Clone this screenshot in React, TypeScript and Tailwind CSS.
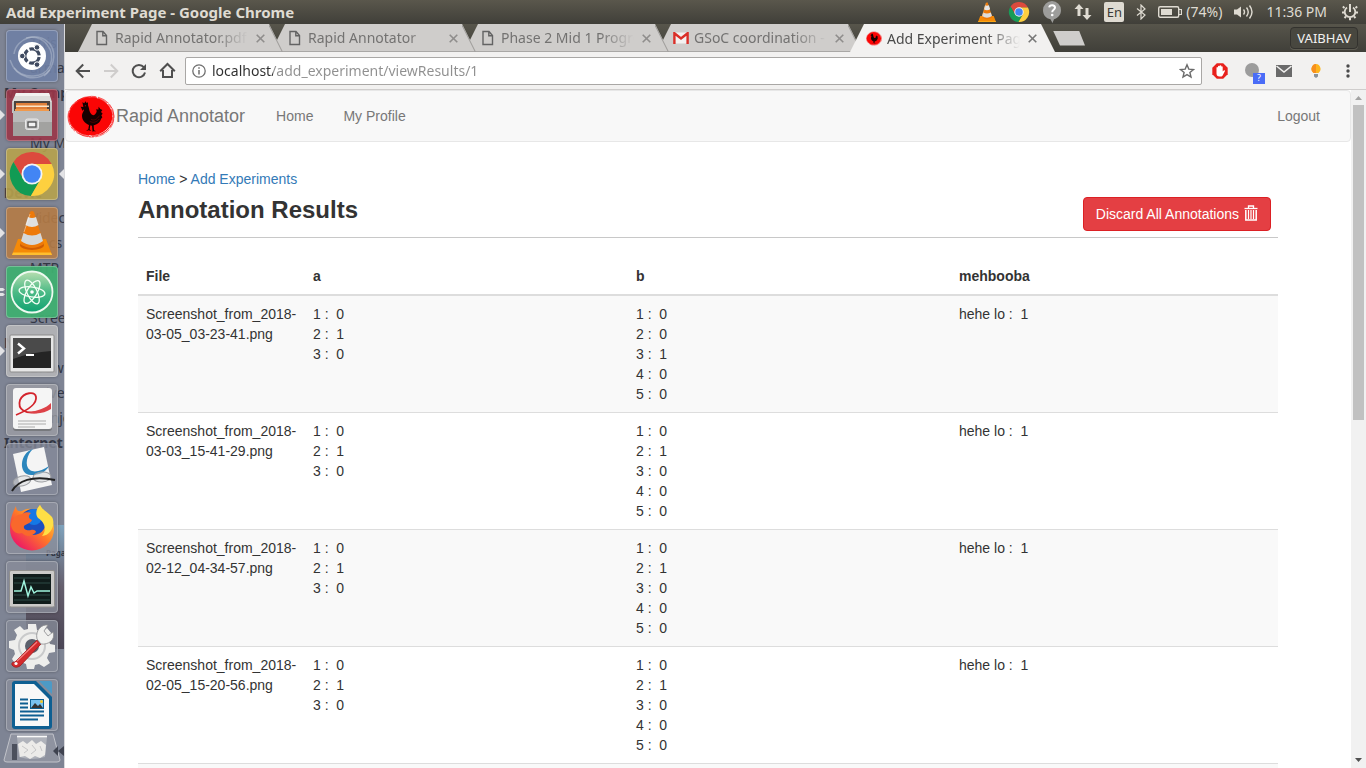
import React from "react";

const uiFont = "font-['Noto_Sans',sans-serif]";

/* ---------- shared glyphs ---------- */

function ChromeLogo({ className }: { className: string }) {
  return (
    <svg viewBox="0 0 48 48" className={className} aria-hidden="true">
      <path d="M43.6 14A22 22 0 0 0 5.5 12L15.3 29L24 24V14Z" fill="#dc4a3d" />
      <path d="M5.5 12A22 22 0 0 0 22.85 46L32.7 29L24 24L15.3 29Z" fill="#179c58" />
      <path d="M22.85 46A22 22 0 0 0 43.6 14H24V24L32.7 29Z" fill="#fdcf41" />
      <circle cx="24" cy="24" r="10.2" fill="#f4f4f4" />
      <circle cx="24" cy="24" r="8.2" fill="#4285f4" />
    </svg>
  );
}

function VlcCone({ className }: { className: string }) {
  return (
    <svg viewBox="0 0 40 44" className={className} aria-hidden="true">
      <path d="M5 31H35L40 44H0Z" fill="#f58a07" />
      <path d="M0 42.5H40V44H0Z" fill="#ffb21c" />
      <path d="M18 2Q20 -1 22 2L32 34Q20 42 8 34Z" fill="#ee7a0a" />
      <path d="M15.8 7Q20 9 24.2 7L27 16Q20 20 13 16Z" fill="#e6e6e6" />
      <path d="M11.5 23Q20 28 28.5 23L31 31Q20 38 9 31Z" fill="#dedede" />
      <path d="M18 2L13 19L9 34" stroke="#ffb35c" strokeWidth="1" fill="none" />
    </svg>
  );
}

function RoosterLogo({ className }: { className: string }) {
  return (
    <svg viewBox="0 0 144 129" className={className} aria-hidden="true">
      <g fill="none" stroke="#fb0505">
        <ellipse cx="73" cy="63" rx="68" ry="59" strokeWidth="2" strokeDasharray="37 3 61 5" />
        <ellipse cx="70" cy="66" rx="67" ry="59" strokeWidth="2" strokeDasharray="19 4 45 6" />
        <ellipse cx="74" cy="66" rx="67" ry="60" strokeWidth="1.500" strokeDasharray="29 5 15 3" transform="rotate(6 72 64)" />
      </g>
      <ellipse cx="71" cy="64" rx="65" ry="57" fill="#fb0505" />
      <path
        d="M48 30L46 22L52 25L55 19L59 24L63 22L63 31C67 40 66 51 73 58C79 64 86 58 89 50L88 42L94 44L95 35L100 42L106 45L102 51L107 56L103 61L106 67L102 72C99 83 89 89 80 91L81 106L87 109H79L77 111L75 92L70 91L68 103L73 108L65 106L57 108L64 103L66 90C53 85 44 73 45 60C46 52 52 48 51 43L46 47L44 41L41 35L49 36Z"
        fill="#150000"
      />
      <path d="M72 73C81 78 91 73 97 62M68 79C79 85 90 81 97 72" stroke="#8e0000" strokeWidth="1.5" fill="none" />
      <circle cx="55" cy="32" r="1.5" fill="#fb0505" />
    </svg>
  );
}

function PageGlyph() {
  return (
    <svg viewBox="0 0 12 16" className="h-4 w-3" fill="none" stroke="#636363" strokeWidth="1.4" aria-hidden="true">
      <path d="M1 1.5H7L10.5 5.5V14.5H1ZM6.8 1.5V5.7H10.5" />
    </svg>
  );
}

function GmailGlyph() {
  return (
    <svg viewBox="0 0 16 12" className="h-3 w-4" aria-hidden="true">
      <path d="M1 0.5H15V11.5H1Z" fill="#f3f1f0" />
      <path d="M1.4 12V1.2L8 6.4L14.6 1.2V12" fill="none" stroke="#da2f28" strokeWidth="2.4" />
    </svg>
  );
}

/* ---------- desktop top panel ---------- */

function TopPanel() {
  return (
    <header
      className={`flex h-6 shrink-0 items-center justify-between bg-linear-to-b from-[#5a574c] to-[#403f39] pl-[6px] pr-[7px] text-[#dfdbd2] ${uiFont}`}
    >
      <h1 className="text-[15px] font-bold leading-6">Add Experiment Page - Google Chrome</h1>
      <div className="flex items-center text-[14px] leading-6">
        <VlcCone className="mr-3 h-5 w-[18px]" />
        <ChromeLogo className="mr-3 h-[22px] w-[22px]" />
        <svg viewBox="0 0 20 24" className="mr-3 h-6 w-5" aria-hidden="true">
          <path d="M10 1A9 9 0 0 1 19 10C19 15 16 18 12 19.2L10.5 23L8.5 19.2C4 18.5 1 15 1 10A9 9 0 0 1 10 1Z" fill="#9d9d9b" />
          <path d="M7.2 7.4C7.6 4.3 13 4.4 13 7.6C13 9.8 10.2 9.8 10.2 12.2" stroke="#fff" strokeWidth="2" fill="none" />
          <circle cx="10.2" cy="15" r="1.3" fill="#fff" />
        </svg>
        <svg viewBox="0 0 18 18" className="mr-3 h-[18px] w-[18px]" fill="#dfdbd2" aria-hidden="true">
          <path d="M5 1L9.5 6H6.500V13H3.500V6H0.500ZM13 17L17.500 12H14.500V5H11.500V12H8.500Z" />
        </svg>
        <span className="mr-3 flex h-5 w-5 items-center justify-center rounded-xs bg-[#dfdbd2] text-[13px] text-[#3c3b37]">En</span>
        <svg viewBox="0 0 10 16" className="mr-3 h-4 w-[10px]" fill="none" stroke="#dfdbd2" strokeWidth="1.2" aria-hidden="true">
          <path d="M1 4.5L9 11L5 15V1L9 5L1 11.5" />
        </svg>
        <svg viewBox="0 0 24 14" className="mr-1 h-[14px] w-6" aria-hidden="true">
          <rect x="0.7" y="1.7" width="20" height="10.6" rx="1.5" fill="none" stroke="#dfdbd2" strokeWidth="1.4" />
          <rect x="3" y="4" width="11" height="6" fill="#dfdbd2" />
          <path d="M21 4.5H23.5V9.5H21" fill="none" stroke="#dfdbd2" strokeWidth="1.2" />
        </svg>
        <span className="mr-3">(74%)</span>
        <svg viewBox="0 0 20 16" className="mr-3 h-4 w-5" aria-hidden="true">
          <path d="M0 5.5H3L7 2.5V13.5L3 10.5H0Z" fill="#dfdbd2" />
          <path d="M9.5 5.5Q11.5 8 9.5 10.5M12.5 3.5Q16 8 12.5 12.5M15.5 1.5Q20.5 8 15.5 14.5" stroke="#dfdbd2" strokeWidth="1.4" fill="none" />
        </svg>
        <time className="mr-[14px]">11:36 PM</time>
        <svg viewBox="0 0 18 18" className="h-[18px] w-[18px]" fill="none" stroke="#dfdbd2" aria-hidden="true">
          <path d="M6 4.5A5.3 5.3 0 1 0 12 4.5" strokeWidth="1.8" />
          <path d="M9 1V9" strokeWidth="2" />
          <path d="M3.5 5L1.8 3.6M14.5 5L16.2 3.6M3.3 9.5H1M14.7 9.5H17M5 13.3L3.5 15M13 13.3L14.5 15M9 15V17.3" strokeWidth="2" />
        </svg>
      </div>
    </header>
  );
}

/* ---------- launcher ---------- */

const ghostRows: { text: string; bold?: boolean; wide?: boolean }[] = [
  { text: "This" },
  { text: "arma" },
  { text: "My Comp", bold: true, wide: true },
  { text: "Vi" },
  { text: "My M" },
  { text: "Pi" },
  { text: "Devic", bold: true, wide: true },
  { text: "Videc" },
  { text: "Docs" },
  { text: "MTP" },
  { text: "Vidi" },
  { text: "Scree" },
  { text: "Netwe", bold: true, wide: true },
  { text: "Brow" },
  { text: "Drive" },
  { text: "Manjo" },
  { text: "Internet", bold: true, wide: true },
];

function DashArt() {
  return (
    <>
      <g fill="none" stroke="#c9cfdd" strokeOpacity="0.4" strokeWidth="1.5">
        <path d="M8 24C10 8 32 0 44 14C52 25 46 40 38 46" />
        <path d="M20 8C38 4 50 20 44 36C38 48 18 50 8 38" />
        <path d="M4 30C10 48 30 54 44 40" />
      </g>
      <circle cx="26" cy="26" r="14" fill="#fff" />
      <circle cx="26" cy="26" r="7.2" fill="none" stroke="#3f4a60" strokeWidth="3.2" strokeDasharray="13.1 2" strokeDashoffset="-1" />
      <g fill="#3f4a60" stroke="#fff" strokeWidth="1">
        <circle cx="16.3" cy="26" r="2.8" />
        <circle cx="31" cy="17.4" r="2.8" />
        <circle cx="31" cy="34.6" r="2.8" />
      </g>
    </>
  );
}

function FilesArt() {
  return (
    <>
      <path d="M10 4H43L46 13H6Z" fill="#dededc" />
      <path d="M10 4H43L44 7H9Z" fill="#f2f2f0" />
      <path d="M6 13H46V24H6Z" fill="#c4c4c2" />
      <rect x="8" y="12" width="36" height="12" fill="#4c4440" />
      <path d="M10 14H41V24H10Z" fill="#e0803a" />
      <path d="M10 16.5H43V18H10Z" fill="#fbe5c8" />
      <path d="M9 20H43V23H9Z" fill="#f0994c" />
      <rect x="7" y="22" width="39" height="25" fill="#a2a2a0" />
      <rect x="7" y="22" width="39" height="11" fill="#bababa" />
      <rect x="19.500" y="30" width="13" height="10.500" rx="2" fill="#cecece" stroke="#e8e8e8" />
      <rect x="22" y="33" width="8" height="5" fill="#f2f2f2" stroke="#4d4d4d" strokeWidth="1.3" />
    </>
  );
}

function ChromeArt() {
  return (
    <g transform="translate(2 2)">
      <path d="M43.6 14A22 22 0 0 0 5.5 12L15.3 29L24 24V14Z" fill="#dc4a3d" />
      <path d="M5.5 12A22 22 0 0 0 22.85 46L32.7 29L24 24L15.3 29Z" fill="#119b54" />
      <path d="M22.85 46A22 22 0 0 0 43.6 14H24V24L32.7 29Z" fill="#fdd03f" />
      <circle cx="24" cy="24" r="10.5" fill="#f4f4f4" />
      <circle cx="24" cy="24" r="8.700" fill="#4285f4" />
    </g>
  );
}

function VlcArt() {
  return (
    <g transform="translate(6 4)">
      <path d="M6 28H34L40 44H0Z" fill="#f58a07" />
      <path d="M1 41.500H39L40 44H0Z" fill="#ffbe2e" />
      <ellipse cx="20" cy="34" rx="12" ry="5" fill="#cf5c04" />
      <path d="M18 1Q20 -1 22 1L32 33Q20 41 8 33Z" fill="#ee7a0a" />
      <path d="M16 6Q20 8 24 6L26.500 14Q20 18 13.500 14Z" fill="#dfe0e0" />
      <path d="M11.500 22Q20 27 28.500 22L31 30Q20 38 9 30Z" fill="#d5d8da" />
      <path d="M18 3L12 21" stroke="#fff" strokeOpacity="0.4" />
    </g>
  );
}

function AtomArt() {
  return (
    <>
      <circle cx="26" cy="26" r="20.500" fill="url(#atomFill)" stroke="#eefaf0" strokeWidth="1.8" />
      <g fill="none" stroke="#f3fff5" strokeWidth="1.300">
        <ellipse cx="26" cy="26" rx="13" ry="5" transform="rotate(8 26 26)" />
        <ellipse cx="26" cy="26" rx="13" ry="5" transform="rotate(64 26 26)" />
        <ellipse cx="26" cy="26" rx="13" ry="5" transform="rotate(121 26 26)" />
      </g>
      <circle cx="26" cy="26" r="1.800" fill="#fff" />
    </>
  );
}

function TerminalArt() {
  return (
    <>
      <rect x="4" y="10" width="44" height="37" rx="1" fill="#e6e6e6" stroke="#8b8b8b" />
      <rect x="7" y="13" width="38" height="30" fill="#242424" />
      <path d="M7 13H45V26Q26 27 7 34Z" fill="#4a4a4a" />
      <path d="M12 18.500L18 23.500L12 28.500" fill="none" stroke="#fff" strokeWidth="2.400" />
      <path d="M20 30H28" stroke="#fff" strokeWidth="2" />
    </>
  );
}

function PdfArt() {
  return (
    <>
      <rect x="7" y="5" width="39" height="42" rx="3" fill="#77797d" />
      <rect x="7" y="4" width="39" height="41" rx="3" fill="#f5f5f5" />
      <path d="M10 31C22 26 31 20 30 13C29 7 18 8 14 16C11 26 20 30 31 28" fill="none" stroke="#d3242c" strokeWidth="1.800" />
      <path d="M22 28C32 27 40 24 45 19V25C39 29 30 31 22 28Z" fill="#dd4248" />
      <path d="M12 37H40M12 40H40M12 43H29" stroke="#c4c4c4" strokeWidth="1.300" />
    </>
  );
}

function ViewerArt() {
  return (
    <>
      <path d="M7 11L38 4L46 42L15 49Z" fill="#f4f4f4" />
      <path d="M27 6C13 10 12 33 26 32C33 32 39 30 43 23C36 28 28 30 24 27C18 23 21 11 27 6Z" fill="#2b86bd" />
      <g fill="#d8dadd" fillOpacity="0.55" stroke="#9b9da1">
        <ellipse cx="16" cy="38" rx="9" ry="5" transform="rotate(-14 16 38)" />
        <ellipse cx="36" cy="34" rx="9" ry="5" transform="rotate(-4 36 34)" />
      </g>
      <path d="M6 48C12 38 26 32 49 37" fill="none" stroke="#222" strokeWidth="2" />
    </>
  );
}

function FirefoxArt() {
  return (
    <>
      <path
        d="M10 4C10 8 12 10 16 9C21 6 26 6 30 9L34 3C35 9 48 14 48 27A22 21.5 0 0 1 4 27C4 18 6 12 10 4Z"
        fill="url(#foxFill)"
      />
      <circle cx="27" cy="20" r="13" fill="#1b4fc0" />
      <circle cx="28" cy="15" r="8" fill="#1478e6" />
      <path
        d="M5 22C7 14 12 13 16 12C19 10 22 10 25 11C22 14 22 16 26 18C25 21 20 22 18 24C17 28 22 29 25 28C28 27 30 29 30 30C27 34 21 36 16 31C10 33 5 28 5 22Z"
        fill="#f9682c"
      />
      <path d="M34 3C30 7 29 12 32 16C39 20 41 28 36 34C45 34 50 22 46 15C42 10 37 9 34 3Z" fill="#ffdf45" />
    </>
  );
}

function MonitorArt() {
  return (
    <>
      <rect x="3.500" y="9.500" width="45" height="36.500" rx="1.500" fill="#cbcac8" stroke="#8f8e8c" />
      <rect x="7" y="13" width="38" height="30" fill="#101c1b" />
      <path d="M8 17H44M8 22H44M8 34H44M8 39H44" stroke="#2c4b46" />
      <path d="M8 30H15L18 20L22 35L25 26L28 32L31 30H44" fill="none" stroke="#9ff3dd" strokeWidth="1.500" />
    </>
  );
}

function SettingsArt() {
  return (
    <>
      <path
        d="M22 4H30L31 10L36 12L41 8L46 14L42 19L44 24L49 25V32L43 33L41 38L44 43L38 47L33 44L29 45L28 49H21L20 44L15 42L10 45L6 39L9 34L8 30L3 28V21L9 20L11 15L8 10L14 6L18 10L22 9Z"
        fill="#eeeeec"
      />
      <circle cx="26" cy="26" r="13" fill="none" stroke="#c9cacb" strokeWidth="2" />
      <circle cx="26" cy="26" r="7" fill="#5b606c" />
      <path d="M9 42L31 20L35 24L14 46Q9 49 6 45Q5 42 9 42Z" fill="#d42a2c" stroke="#9d1c1e" strokeWidth="0.800" />
      <path d="M11 41L31 22" stroke="#f38080" strokeWidth="1.200" />
      <path d="M31 19C29 10 36 4 42 5L38 11L42 16L47 12C50 20 42 25 35 24Z" fill="#f1f1ef" stroke="#8b8c8e" strokeWidth="0.800" />
      <circle cx="10" cy="43.500" r="1.600" fill="#fff" />
    </>
  );
}

function WriterArt() {
  return (
    <>
      <path d="M6 5Q6 2 9 2H30L46 18V47Q46 50 43 50H9Q6 50 6 47Z" fill="#0e5f92" />
      <path d="M9 5H28L43 20V47H9Z" fill="#f8f8f8" />
      <path d="M33 2H44Q46 2 46 4V15Z" fill="#4d9ac6" />
      <path d="M14 20.500H22M14 24.500H22M14 28.500H22M14 32.500H38M14 36.500H38M14 40.500H32" stroke="#0e5f92" strokeWidth="2" />
      <rect x="24.500" y="20.500" width="13" height="9" fill="#79c1ee" stroke="#0e5f92" />
      <path d="M25 29L29 24L32 27L34 25L37 29Z" fill="#333" />
      <circle cx="35.500" cy="22.500" r="1.500" fill="#f5c928" />
    </>
  );
}

type LauncherItem = { name: string; tile: string; art: () => React.JSX.Element; running?: boolean };

const launcher: LauncherItem[] = [
  { name: "Search your computer", tile: "bg-[#6f7fa4]/90", art: DashArt },
  { name: "Files", tile: "bg-[#9a3648]/90", art: FilesArt, running: true },
  { name: "Google Chrome", tile: "bg-[#b7a24b]/90", art: ChromeArt, running: true },
  { name: "VLC media player", tile: "bg-[#b57b45]/90", art: VlcArt, running: true },
  { name: "Atom", tile: "bg-[#3fae70]/95", art: AtomArt, running: true },
  { name: "Terminal", tile: "bg-[#b5b5b7]/90", art: TerminalArt, running: true },
  { name: "Document Viewer", tile: "bg-[#9c9ea4]/80", art: PdfArt },
  { name: "Okular", tile: "bg-[#858a98]/80", art: ViewerArt },
  { name: "Firefox", tile: "bg-[#8b8f9b]/80", art: FirefoxArt },
  { name: "System Monitor", tile: "bg-[#888c98]/80", art: MonitorArt },
  { name: "System Settings", tile: "bg-[#858a96]/80", art: SettingsArt },
  { name: "LibreOffice Writer", tile: "bg-[#8b8f9b]/70", art: WriterArt },
];

function Launcher() {
  return (
    <nav aria-label="Launcher" className="relative w-[65px] shrink-0 overflow-hidden border-r border-[#d9d9dc] bg-[#7e8494]">
      <div aria-hidden="true" className={`absolute inset-0 pt-[6px] text-[14px] leading-[25px] text-[#343846] ${uiFont}`}>
        {ghostRows.map((row) => (
          <div
            key={row.text}
            className={`h-[25px] whitespace-nowrap ${row.bold ? "font-bold" : ""} ${row.wide ? "pl-1" : "pl-[30px]"}`}
          >
            {row.text}
          </div>
        ))}
        <div className="ml-[26px] mt-[70px] h-[124px] bg-linear-to-b from-[#7fa3bd] via-[#655f6d] to-[#4b4656] pt-5 leading-3">
          <span className="pl-5 text-[8px] font-bold">Pagal</span>
        </div>
      </div>
      <svg className="absolute h-0 w-0" aria-hidden="true">
        <defs>
          <linearGradient id="atomFill" x1="0" y1="0" x2="0" y2="1">
            <stop offset="0" stopColor="#b8deb0" />
            <stop offset="0.5" stopColor="#4cba86" />
            <stop offset="1" stopColor="#0fa271" />
          </linearGradient>
          <linearGradient id="foxFill" x1="0.9" y1="0.1" x2="0.2" y2="0.9">
            <stop offset="0" stopColor="#ffd63c" />
            <stop offset="0.5" stopColor="#ff7a26" />
            <stop offset="1" stopColor="#ee1d63" />
          </linearGradient>
        </defs>
      </svg>
      <ul className="relative flex flex-col gap-[7px] pt-[6px]">
        {launcher.map(({ name, tile, art: Art, running }) => (
          <li key={name} className="flex items-center">
            <span className="flex w-[6px] shrink-0">
              {running && (
                <svg viewBox="0 0 5 10" className="h-[10px] w-[5px]" aria-hidden="true">
                  {name === "Atom" ? (
                    <path d="M0 1H3L5 2.500L3 4H0ZM0 6H3L5 7.500L3 9H0Z" fill="#e3e3e6" />
                  ) : (
                    <path d="M0 0L5 5L0 10Z" fill="#e3e3e6" />
                  )}
                </svg>
              )}
            </span>
            <button
              type="button"
              aria-label={name}
              className={`h-[52px] w-[52px] rounded-sm border border-white/25 shadow-[0_0_3px_#00000055] ${tile}`}
            >
              <svg viewBox="1 1 50 50" className="h-full w-full" aria-hidden="true">
                <Art />
              </svg>
            </button>
            {name === "Google Chrome" && (
              <svg viewBox="0 0 5 10" className="ml-px h-[10px] w-[5px]" aria-hidden="true">
                <path d="M5 0L0 5L5 10Z" fill="#e3e3e6" />
              </svg>
            )}
          </li>
        ))}
      </ul>
      <button type="button" aria-label="Trash" className="relative mt-[2px] block w-full">
        <svg viewBox="0 0 64 35" className="h-[35px] w-16" aria-hidden="true">
          <path d="M11 1H53L60 27Q60 29 57 29H7Q4 29 4 27Z" fill="#9da0aa" fillOpacity="0.55" stroke="#c1c3ca" />
          <path d="M12 11H17V27H12Z" fill="#4c505d" />
          <path d="M58 13L53 18L58 23ZM64 13L58 18L64 23Z" fill="#3f4350" />
          <path d="M17 4H47L45 24Q32 28 19 24Z" fill="#dfe0e2" fillOpacity="0.4" />
          <path d="M17 3.500H47" stroke="#fafafa" strokeWidth="1.600" />
          <path d="M18 11L23 8L27 11L32 7L36 11L41 8L46 12L45 22L40 25L35 23L30 26L25 23L20 24Z" fill="#ecebe9" />
          <path d="M22 13L28 17L24 20M32 12L36 17L31 21M40 13L42 18" stroke="#c6c6c7" fill="none" />
        </svg>
      </button>
    </nav>
  );
}

/* ---------- browser chrome ---------- */

const tabs = [
  { title: "Rapid Annotator.pdf", icon: <PageGlyph />, layer: "z-40" },
  { title: "Rapid Annotator", icon: <PageGlyph />, layer: "z-30" },
  { title: "Phase 2 Mid 1 Progress", icon: <PageGlyph />, layer: "z-20" },
  { title: "GSoC coordination - mail", icon: <GmailGlyph />, layer: "z-10" },
  { title: "Add Experiment Page", icon: <RoosterLogo className="h-[15px] w-4" />, layer: "z-50", active: true },
];

function TabStrip() {
  return (
    <div className={`flex h-7 items-center bg-linear-to-b from-[#57554b] to-[#403f39] pl-[13px] pr-2 ${uiFont}`}>
      {tabs.map((tab) => (
        <div
          key={tab.title}
          className={`relative -mr-3 flex h-7 w-[205px] items-center px-4 pt-px [clip-path:polygon(14px_0,calc(100%-14px)_0,100%_100%,0_100%)] ${tab.layer} ${
            tab.active ? "bg-[#f2f1f0] text-[#4a4a4a]" : "border-b border-[#a9a7a5] bg-[#cfcdcb] text-[#737271]"
          }`}
        >
          {!tab.active && (
            <svg viewBox="0 0 14 28" className="absolute right-0 top-0 h-7 w-[14px]" aria-hidden="true">
              <path d="M0 0L14 28" stroke="#a09e9c" strokeWidth="2" />
            </svg>
          )}
          <span className="flex w-4 shrink-0 justify-center">{tab.icon}</span>
          <a
            href="#tab"
            className="ml-[5px] flex-1 overflow-hidden whitespace-nowrap text-[14px] leading-7 [mask-image:linear-gradient(to_right,black_calc(100%-38px),transparent_calc(100%-4px))]"
          >
            {tab.title}
          </a>
          <button type="button" aria-label={`Close ${tab.title}`} className="ml-1 mr-[2px] flex h-4 w-[9px] shrink-0 items-center">
            <svg viewBox="0 0 9 9" className="h-[9px] w-[9px]" stroke={tab.active ? "#777" : "#8f8d8c"} strokeWidth="1.6" aria-hidden="true">
              <path d="M0.700 0.700L8.300 8.300M8.300 0.700L0.700 8.300" />
            </svg>
          </button>
        </div>
      ))}
      <button
        type="button"
        aria-label="New tab"
        className="ml-[10px] h-[15px] w-8 bg-[#cfcdcb] [clip-path:polygon(0_0,26px_0,100%_100%,7px_100%)]"
      />
      <button
        type="button"
        className="ml-auto h-[22px] rounded-sm border border-[#33322e] bg-[#48473f] px-[6px] text-[13px] leading-5 text-[#f2f1f0] shadow-[0_1px_0_#5e5c52]"
      >
        VAIBHAV
      </button>
    </div>
  );
}

function Toolbar() {
  return (
    <div className={`flex h-[38px] items-center border-b border-[#cfcdcc] bg-[#f2f1f0] pl-[10px] pr-4 ${uiFont}`}>
      <button type="button" aria-label="Back" className="mr-3">
        <svg viewBox="0 0 16 16" className="h-4 w-4" fill="none" stroke="#4f4f4f" strokeWidth="2" aria-hidden="true">
          <path d="M15 8H2M8.200 1.500L1.700 8L8.200 14.500" />
        </svg>
      </button>
      <button type="button" aria-label="Forward" className="mr-3">
        <svg viewBox="0 0 16 16" className="h-4 w-4" fill="none" stroke="#cfcdcc" strokeWidth="2" aria-hidden="true">
          <path d="M1 8H14M7.800 1.500L14.300 8L7.800 14.500" />
        </svg>
      </button>
      <button type="button" aria-label="Reload" className="mr-3">
        <svg viewBox="0 0 16 16" className="h-4 w-4" fill="none" stroke="#4f4f4f" strokeWidth="2" aria-hidden="true">
          <path d="M12.800 4.200A6.200 6.200 0 1 0 14 9.500" />
          <path d="M15 1V7H9Z" fill="#4f4f4f" stroke="none" />
        </svg>
      </button>
      <button type="button" aria-label="Home page" className="mr-[9px]">
        <svg viewBox="0 0 17 17" className="h-[17px] w-[17px]" fill="none" stroke="#4f4f4f" strokeWidth="2" aria-hidden="true">
          <path d="M1.200 9.200L8.500 2L15.800 9.200M4 8V15H13V8" />
        </svg>
      </button>
      <div className="flex h-7 flex-1 items-center rounded-xs border border-[#a9a7a5] bg-white px-[6px]">
        <svg viewBox="0 0 14 14" className="mr-[6px] h-[14px] w-[14px] shrink-0" fill="none" stroke="#6f6f6f" aria-hidden="true">
          <circle cx="7" cy="7" r="6.200" strokeWidth="1.300" />
          <path d="M7 6V10.500M7 3.300V4.800" strokeWidth="1.500" />
        </svg>
        <input
          aria-label="Address"
          defaultValue="localhost/add_experiment/viewResults/1"
          className="h-6 min-w-0 flex-1 bg-linear-to-r from-[#2f2f2f] from-[61px] to-[#8f8f8f] to-[61px] bg-clip-text text-[14px] text-transparent outline-none"
        />
        <button type="button" aria-label="Bookmark this page">
          <svg viewBox="0 0 16 16" className="h-4 w-4" fill="none" stroke="#6b6b6b" strokeWidth="1.400" aria-hidden="true">
            <path d="M8 1.800L9.800 6.100L14.500 6.500L10.900 9.500L12 14L8 11.600L4 14L5.100 9.500L1.500 6.500L6.200 6.100Z" />
          </svg>
        </button>
      </div>
      <button type="button" aria-label="Ad blocker" className="ml-[10px]">
        <svg viewBox="0 0 16 16" className="h-4 w-4" aria-hidden="true">
          <path d="M4.800 0.300H11.200L15.700 4.800V11.200L11.200 15.700H4.800L0.300 11.200V4.800Z" fill="#e8211d" />
          <path d="M4.500 8V4.500Q5.300 3.500 6 4.500V3.200Q6.900 2.300 7.600 3.200V2.500Q8.400 1.800 9.200 2.500V3.500Q10 2.800 10.700 3.700V8.500L12 7.200Q13.200 7 13 8L10.500 12.700Q9.500 13.800 7.500 13.500Q4.500 13.300 4.500 10.500Z" fill="#fff" />
        </svg>
      </button>
      <button type="button" aria-label="Helper extension" className="relative ml-4 h-4 w-[17px]">
        <svg viewBox="0 0 17 16" className="h-4 w-[17px]" aria-hidden="true">
          <circle cx="8" cy="7" r="7" fill="#9c9c9c" />
        </svg>
        <span className="absolute left-[9px] top-[10px] flex h-[11px] w-3 items-center justify-center bg-[#4a6cf7] text-[9px] text-white">?</span>
      </button>
      <button type="button" aria-label="Mail" className="ml-[15px]">
        <svg viewBox="0 0 16 12" className="h-3 w-4" aria-hidden="true">
          <path d="M0 0H16V12H0Z" fill="#6a6a6a" />
          <path d="M0.500 1L8 7L15.500 1" fill="none" stroke="#f2f1f0" strokeWidth="1.600" />
        </svg>
      </button>
      <button type="button" aria-label="Tips" className="ml-[19px]">
        <svg viewBox="0 0 10 14" className="h-[14px] w-[10px]" aria-hidden="true">
          <path d="M5 0A5 5 0 0 1 7.500 9H2.500A5 5 0 0 1 5 0Z" fill="#fdb51e" />
          <path d="M5 0A5 5 0 0 0 2.500 9H5Z" fill="#f78f1e" />
          <path d="M3 10H7V12.500L5 14L3 12.500Z" fill="#8a9299" />
        </svg>
      </button>
      <button type="button" aria-label="Browser menu" className="ml-[25px]">
        <svg viewBox="0 0 4 14" className="h-[14px] w-1" fill="#4a4a4a" aria-hidden="true">
          <circle cx="2" cy="2" r="1.700" />
          <circle cx="2" cy="7" r="1.700" />
          <circle cx="2" cy="12" r="1.700" />
        </svg>
      </button>
    </div>
  );
}

/* ---------- page ---------- */

const results = [
  { file: ["Screenshot_from_2018-", "03-05_03-23-41.png"], a: [0, 1, 0], b: [0, 0, 1, 0, 0], m: 1 },
  { file: ["Screenshot_from_2018-", "03-03_15-41-29.png"], a: [0, 1, 0], b: [0, 1, 0, 0, 0], m: 1 },
  { file: ["Screenshot_from_2018-", "02-12_04-34-57.png"], a: [0, 1, 0], b: [0, 1, 0, 0, 0], m: 1 },
  { file: ["Screenshot_from_2018-", "02-05_15-20-56.png"], a: [0, 1, 0], b: [0, 1, 0, 0, 0], m: 1 },
];

function Counts({ values }: { values: number[] }) {
  return (
    <>
      {values.map((value, i) => (
        <div key={i}>
          {i + 1} :&nbsp; {value}
        </div>
      ))}
    </>
  );
}

function ResultsPage() {
  return (
    <div className="min-w-0 flex-1 overflow-hidden bg-white font-['Liberation_Sans',sans-serif] text-[14px] leading-5 text-[#333]">
      <nav className="flex h-[52px] items-center rounded-sm border border-[#e7e7e7] bg-[#f8f8f8] text-[#777]">
        <a href="#brand" className="flex items-center pl-px text-[18px]">
          <RoosterLogo className="h-[43px] w-12" />
          <span className="ml-px">Rapid Annotator</span>
        </a>
        <a href="#home" className="ml-[31px]">Home</a>
        <a href="#profile" className="ml-[30px]">My Profile</a>
        <a href="#logout" className="ml-auto mr-[30px]">Logout</a>
      </nav>
      <main className="mx-auto max-w-[1170px] px-[15px] pt-[27px]">
        <div>
          <a href="#home" className="text-[#337ab7]">Home</a> &gt;{" "}
          <a href="#experiments" className="text-[#337ab7]">Add Experiments</a>
        </div>
        <div className="flex items-start justify-between border-b border-[#c8c8c8] pb-[6px] pt-2">
          <h2 className="text-[24px] font-bold leading-[26px]">Annotation Results</h2>
          <button
            type="button"
            className="mr-[7px] flex h-[34px] items-center rounded-sm border border-[#dc2024] bg-[#e43f43] px-3 text-white"
          >
            Discard All Annotations
            <svg viewBox="0 0 14 16" className="mb-[3px] ml-[5px] h-4 w-[14px]" fill="none" stroke="#fff" aria-hidden="true">
              <path d="M0.500 3.500H13.500" strokeWidth="1.300" />
              <path d="M4.500 3V1H9.500V3" strokeWidth="1.300" />
              <path d="M1.800 5V14.900H12.200V5" strokeWidth="1.500" />
              <path d="M4.500 5V14M7 5V14M9.500 5V14" strokeWidth="1.200" />
            </svg>
          </button>
        </div>
        <table className="mt-5 w-full table-fixed border-collapse text-left">
          <thead>
            <tr className="border-b-2 border-[#ddd]">
              <th className="w-[167px] p-2">File</th>
              <th className="w-[323px] p-2">a</th>
              <th className="w-[323px] p-2">b</th>
              <th className="p-2">mehbooba</th>
            </tr>
          </thead>
          <tbody>
            {results.map((row) => (
              <tr key={row.file[1]} className="border-t border-[#ddd] align-top odd:bg-[#f9f9f9]">
                <td className="p-2">
                  {row.file[0]}
                  <wbr />
                  {row.file[1]}
                </td>
                <td className="p-2"><Counts values={row.a} /></td>
                <td className="p-2"><Counts values={row.b} /></td>
                <td className="p-2">hehe lo :&nbsp; {row.m}</td>
              </tr>
            ))}
            <tr className="h-10 border-t border-[#ddd] odd:bg-[#f9f9f9]">
              <td colSpan={4} />
            </tr>
          </tbody>
        </table>
      </main>
    </div>
  );
}

function Scrollbar() {
  return (
    <div aria-hidden="true" className="flex w-[15px] shrink-0 flex-col items-center bg-[#f1f1f1]">
      <svg viewBox="0 0 15 15" className="h-[15px] w-[15px]">
        <path d="M4 10L7.500 6L11 10Z" fill="#a3a3a3" />
      </svg>
      <div className="h-[315px] w-[11px] bg-[#c1c1c1]" />
      <svg viewBox="0 0 15 15" className="mt-auto h-[15px] w-[15px]">
        <path d="M4 5L7.500 9L11 5Z" fill="#505050" />
      </svg>
    </div>
  );
}

export default function App() {
  return (
    <div className="flex h-screen flex-col overflow-hidden">
      <TopPanel />
      <div className="flex min-h-0 flex-1">
        <Launcher />
        <div className="flex min-w-0 flex-1 flex-col">
          <TabStrip />
          <Toolbar />
          <div className="flex min-h-0 flex-1">
            <ResultsPage />
            <Scrollbar />
          </div>
        </div>
      </div>
    </div>
  );
}
